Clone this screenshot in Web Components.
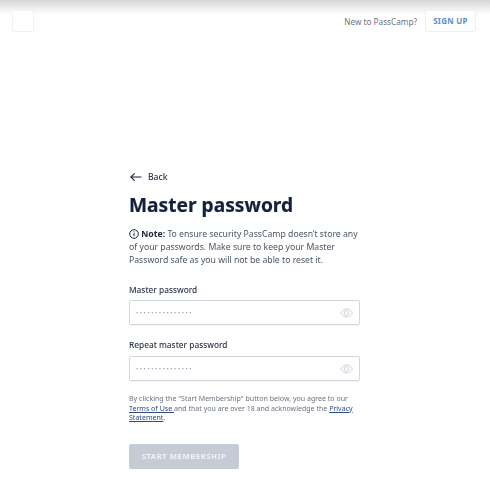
<!DOCTYPE html>
<html lang="en">
<head>
<meta charset="utf-8">
<title>PassCamp - Master password</title>
<style>
    html, body { margin: 0; height: 100%; background: #fff; }
    body { font-family: 'Noto Sans', sans-serif; overflow: hidden; }
</style>
</head>
<body>
<pc-page>
    <pc-header slot="header"></pc-header>
    <pc-back>Back</pc-back>
    <h1>Master password</h1>
    <pc-note><b>Note:</b> To ensure security PassCamp doesn’t store any of your passwords. Make sure to keep your Master Password safe as you will not be able to reset it.</pc-note>
    <pc-field label="Master password"></pc-field>
    <pc-field label="Repeat master password"></pc-field>
    <pc-legal>By clicking the "Start Membership" button below, you agree to our <a href="#">Terms of Use </a>and that you are over 18 and acknowledge the <a href="#">Privacy Statement</a>.</pc-legal>
    <pc-submit>START MEMBERSHIP</pc-submit>
</pc-page>

<script>
// Small helper so each element is just a style + markup string.
class PcBase extends HTMLElement {
    constructor() {
        super();
        this.root = this.attachShadow({ mode: 'open' });
    }
    connectedCallback() {
        this.root.innerHTML = `<style>${this.css()}</style>${this.html()}`;
    }
    css() { return ':host { display: block; }'; }
    html() { return '<slot></slot>'; }
}

class PcPage extends PcBase {
    css() {
        return `
            :host { display: block; height: 496px; filter: blur(0.4px); }
            .column { width: 231px; margin-left: 129px; padding-top: 128px; }
            ::slotted(h1) {
                margin: 7px 0 9px;
                font: 700 19.2px/28px 'Noto Sans', sans-serif;
                -webkit-text-stroke: 0.2px #14213d;
                color: #14213d;
            }
        `;
    }
    html() {
        return `
            <slot name="header"></slot>
            <div class="column"><slot></slot></div>
        `;
    }
}

class PcHeader extends PcBase {
    css() {
        return `
            :host {
                display: flex;
                justify-content: space-between;
                height: 42px;
                padding: 10px 14px 0 12px;
                box-sizing: border-box;
                background: linear-gradient(#d6d6d6 0, #eeeeee 8px, #fff 15px);
            }
            .logo {
                width: 22px;
                height: 22px;
                box-sizing: border-box;
                border: 1px solid #f0f1f3;
                border-radius: 2px;
                background: #fff;
            }
            .right { display: flex; align-items: center; gap: 8px; height: 22px; }
            .ask { font-size: 8.2px; color: #6b7280; }
            .signup {
                width: 51px;
                height: 22px;
                box-sizing: border-box;
                display: flex;
                align-items: center;
                justify-content: center;
                border: 1px solid #eef0f3;
                border-radius: 2px;
                background: #fff;
                font-size: 7.9px;
                font-weight: 700;
                letter-spacing: 0.3px;
                color: #5b8fc7;
            }
        `;
    }
    html() {
        return `
            <div class="logo"></div>
            <div class="right">
                <span class="ask">New to PassCamp?</span>
                <span class="signup">SIGN UP</span>
            </div>
        `;
    }
}

class PcBack extends PcBase {
    css() {
        return `
            :host {
                display: flex;
                align-items: center;
                gap: 6px;
                height: 14px;
                font-size: 8.6px;
                font-weight: 500;
                color: #2b3448;
            }
            svg { width: 12px; height: 10px; display: block; margin-left: 1px; }
        `;
    }
    html() {
        return `
            <svg viewBox="0 0 12 10" fill="none" stroke="#1c2539" stroke-width="1.1">
                <path d="M11.5 5H.8M4.6 1.4.9 5l3.7 3.6"/>
            </svg>
            <slot></slot>
        `;
    }
}

class PcNote extends PcBase {
    css() {
        return `
            :host {
                display: block;
                font-size: 8.68px;
                line-height: 13px;
                color: #4b5563;
            }
            svg { width: 10px; height: 10px; vertical-align: -1.5px; }
            ::slotted(b) { color: #1c2539; font-weight: 700; }
        `;
    }
    html() {
        return `
            <svg viewBox="0 0 10 10" fill="none" stroke="#1c2539" stroke-width="1">
                <circle cx="5" cy="5" r="4.3"/>
                <path d="M5 4.2v3M5 2.4v1"/>
            </svg>
            <slot></slot>
        `;
    }
}

class PcField extends PcBase {
    css() {
        return `
            :host { display: block; margin-top: 14px; }
            :host(:first-of-type) { margin-top: 17px; }
            label {
                display: block;
                font-size: 8.3px;
                font-weight: 500;
                line-height: 12px;
                color: #2b3448;
                margin-bottom: 5px;
            }
            :host(:first-of-type) label { margin-bottom: 4px; }
            .box {
                display: flex;
                align-items: center;
                justify-content: space-between;
                height: 25px;
                box-sizing: border-box;
                padding: 0 6px;
                background: #fff;
                border: 1px solid #d3d7de;
                border-radius: 2px;
                box-shadow: 0 1px 1px rgba(20, 33, 61, 0.05);
            }
            .dots { font-size: 6px; letter-spacing: 1.55px; color: #9ca3af; }
            svg { width: 13px; height: 10px; display: block; }
        `;
    }
    html() {
        return `
            <label>${this.getAttribute('label')}</label>
            <div class="box">
                <span class="dots">•••••••••••••••</span>
                <svg viewBox="0 0 13 10" fill="none" stroke="#c3c7cd" stroke-width="0.8">
                    <path d="M.6 5C2.2 2.4 4.2 1 6.5 1s4.3 1.4 5.9 4c-1.6 2.6-3.6 4-5.9 4S2.2 7.6.6 5z"/>
                    <circle cx="6.5" cy="5" r="2.3"/>
                </svg>
            </div>
        `;
    }
}

class PcLegal extends PcBase {
    css() {
        return `
            :host {
                display: block;
                margin-top: 13px;
                font-size: 7.05px;
                line-height: 9.5px;
                color: #6b7280;
            }
            ::slotted(a) { color: #2f4a86; text-decoration: underline; }
        `;
    }
}

class PcSubmit extends PcBase {
    css() {
        return `
            :host {
                display: flex;
                align-items: center;
                justify-content: center;
                width: 110px;
                height: 25px;
                margin-top: 21px;
                border-radius: 2px;
                background: #c6ccd6;
                color: #f1f3f6;
                font-size: 7.6px;
                font-weight: 700;
                letter-spacing: 0.6px;
            }
        `;
    }
}

customElements.define('pc-page', PcPage);
customElements.define('pc-header', PcHeader);
customElements.define('pc-back', PcBack);
customElements.define('pc-note', PcNote);
customElements.define('pc-field', PcField);
customElements.define('pc-legal', PcLegal);
customElements.define('pc-submit', PcSubmit);
</script>
</body>
</html>
